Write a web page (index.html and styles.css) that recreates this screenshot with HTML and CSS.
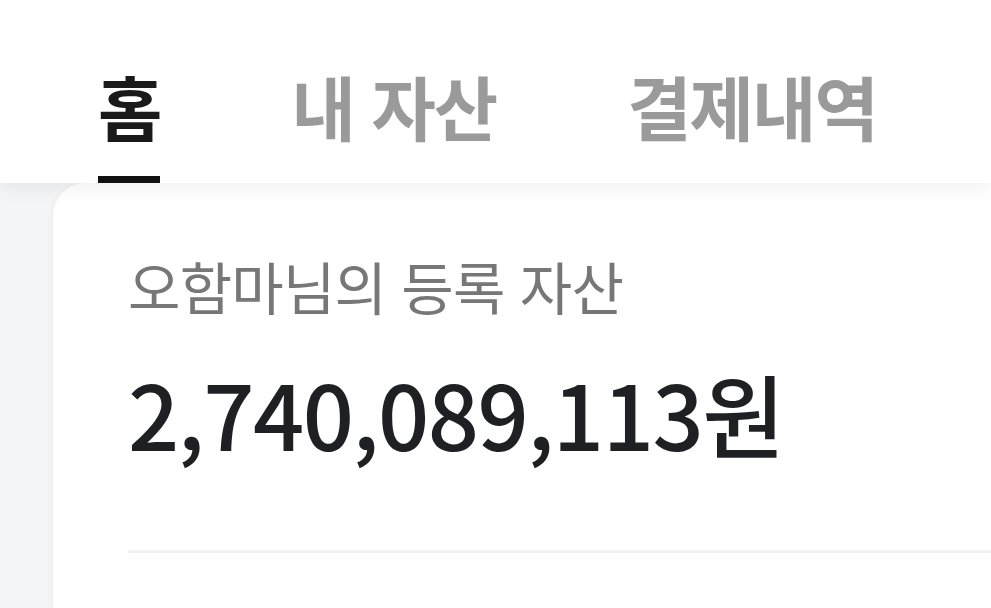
FILE: index.html
```html
<!DOCTYPE html>
<html lang="ko">

<head>
  <meta charset="utf-8">
  <title>홈</title>
  <meta name="viewport" content="width=device-width, initial-scale=1">
  <link rel="stylesheet" href="styles.css">
</head>

<body>
  <header class="tabs">
    <a class="tab active">홈</a>
    <a class="tab">내 자산</a>
    <a class="tab">결제내역</a>
  </header>
  <main class="content">
    <section class="card">
      <p class="card-label">오함마님의 등록 자산</p>
      <h2 class="card-amount">2,740,089,113원</h2>
      <hr class="card-divider">
    </section>
  </main>
</body>

</html>
```

FILE: styles.css
```css
* {
  box-sizing: border-box;
  margin: 0;
  padding: 0;
  font-family: "Noto Sans CJK KR", "Noto Sans", sans-serif;
}

html,
body {
  height: 100%;
  overflow: hidden;
}

body {
  background-color: #f4f5f7;
  display: flex;
  flex-direction: column;
}

.tabs {
  position: relative;
  z-index: 2;
  display: flex;
  gap: 131px;
  height: 183px;
  padding: 0 0 0 98px;
  background: #fff;
  box-shadow: 0 6px 18px rgba(0, 0, 0, 0.06);
}

.tab {
  display: flex;
  align-items: center;
  height: 100%;
  padding-top: 34px;
  font-size: 70px;
  font-weight: 600;
  color: #9a9a9a;
  letter-spacing: -2px;
  border-bottom: 7px solid transparent;
}

.tab.active {
  color: #1a1a1a;
  border-bottom-color: #111;
}

.content {
  flex: 1;
  padding-left: 53px;
}

.card {
  height: 100%;
  background: #fff;
  border-top-left-radius: 32px;
  box-shadow: -2px 0 4px rgba(0, 0, 0, 0.03);
  padding: 65px 0 0 75px;
}

.card-label {
  font-size: 57px;
  font-weight: 400;
  color: #777;
  letter-spacing: -0.8px;
  line-height: 1.3;
}

.card-amount {
  margin-top: 36px;
  font-size: 90px;
  font-weight: 500;
  color: #1f2024;
  letter-spacing: -1.5px;
  line-height: 1.2;
}

.card-divider {
  margin-top: 84px;
  border: none;
  height: 3px;
  background: #f0f1f3;
}
```
